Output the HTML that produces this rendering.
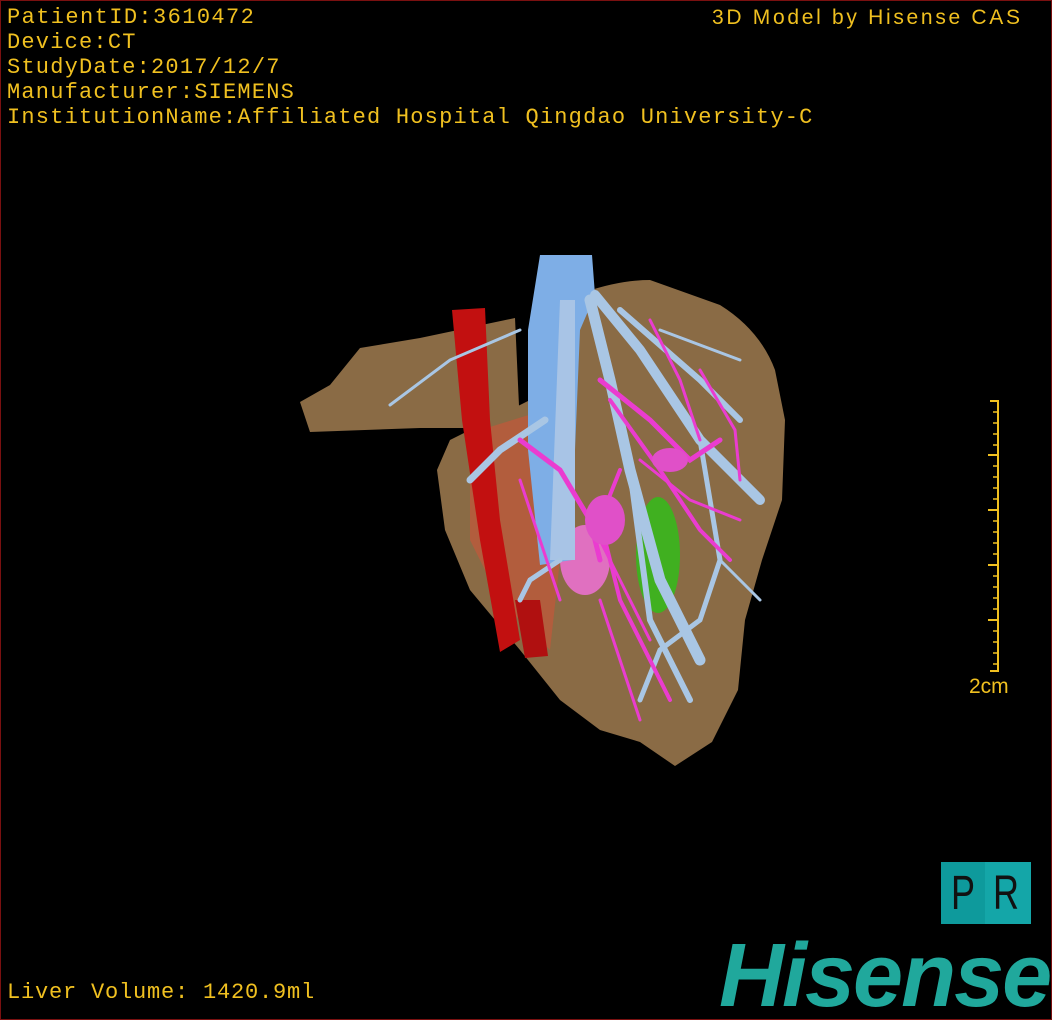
<!DOCTYPE html>
<html><head><meta charset="utf-8"><style>
html,body{margin:0;padding:0;background:#000;}
#w{position:relative;width:1052px;height:1020px;background:#000;box-sizing:border-box;border:1px solid #7a1010;overflow:hidden;font-family:"Liberation Mono",monospace;}
.t{position:absolute;color:#f0c020;font-size:22px;line-height:25px;white-space:pre;letter-spacing:1.2px;}
</style></head><body><div id="w">
<div class="t" style="left:6px;top:4px;letter-spacing:1.4px">PatientID:3610472</div>
<div class="t" style="left:6px;top:29px">Device:CT
StudyDate:2017/12/7
Manufacturer:SIEMENS
InstitutionName:Affiliated Hospital Qingdao University-C</div>
<div class="t" style="left:711px;top:4px;font-family:'Liberation Sans',sans-serif;font-size:21px;letter-spacing:2.7px">3D Model by Hisense CAS</div>
<div class="t" style="left:6px;top:979px;font-size:22px;letter-spacing:0.8px">Liver Volume: 1420.9ml</div>
<div class="t" style="left:968px;top:673px;font-family:'Liberation Sans',sans-serif;font-size:21px;letter-spacing:0">2cm</div>
<svg width="1052" height="1020" style="position:absolute;left:-1px;top:-1px">
<g stroke="#f0c020" stroke-width="2">
<line x1="998" y1="400" x2="998" y2="672"/>
<line x1="990" y1="401" x2="998" y2="401"/>
<line x1="990" y1="671" x2="998" y2="671"/>
<line x1="988" y1="455" x2="998" y2="455"/>
<line x1="988" y1="510" x2="998" y2="510"/>
<line x1="988" y1="565" x2="998" y2="565"/>
<line x1="988" y1="620" x2="998" y2="620"/>
<g stroke-width="1.5">
<line x1="993" y1="412" x2="998" y2="412"/><line x1="993" y1="423" x2="998" y2="423"/><line x1="993" y1="434" x2="998" y2="434"/><line x1="993" y1="445" x2="998" y2="445"/>
<line x1="993" y1="466" x2="998" y2="466"/><line x1="993" y1="477" x2="998" y2="477"/><line x1="993" y1="488" x2="998" y2="488"/><line x1="993" y1="499" x2="998" y2="499"/>
<line x1="993" y1="521" x2="998" y2="521"/><line x1="993" y1="532" x2="998" y2="532"/><line x1="993" y1="543" x2="998" y2="543"/><line x1="993" y1="554" x2="998" y2="554"/>
<line x1="993" y1="576" x2="998" y2="576"/><line x1="993" y1="587" x2="998" y2="587"/><line x1="993" y1="598" x2="998" y2="598"/><line x1="993" y1="609" x2="998" y2="609"/>
<line x1="993" y1="631" x2="998" y2="631"/><line x1="993" y1="642" x2="998" y2="642"/><line x1="993" y1="653" x2="998" y2="653"/><line x1="993" y1="664" x2="998" y2="664"/>
</g></g>
<path d="M300,402 L330,385 L360,348 L420,338 L515,318 L520,428 L420,428 L310,432 Z" fill="#8a6b45"/>
<path d="M585,292 Q620,280 650,280 L720,305 Q760,330 775,370 L785,420 L782,500 L762,560 L745,620 L738,690 L712,742 L675,766 L640,742 L600,730 L560,700 L520,650 L470,590 L445,530 L437,470 L450,440 L480,425 L530,400 Z" fill="#8a6b45"/>
<path d="M480,430 L545,410 L560,560 L550,650 L500,600 L470,540 L470,460 Z" fill="#b85b3c" opacity="0.85"/>
<path d="M452,310 L485,308 L490,420 L500,520 L520,640 L500,652 L480,540 L462,420 Z" fill="#c21010"/>
<path d="M515,600 L540,600 L548,656 L525,658 Z" fill="#b01010"/>
<ellipse cx="658" cy="555" rx="22" ry="58" fill="#40b020"/>
<ellipse cx="585" cy="560" rx="25" ry="35" fill="#e070c0"/>
<path d="M540,255 L592,255 L595,295 L580,330 L575,450 L572,560 L540,565 L528,450 L528,330 Z" fill="#7eaee6"/>
<path d="M560,300 L575,300 L575,560 L550,560 Z" fill="#a8c4e6"/>
<g stroke="#a9c6e4" fill="none" stroke-linecap="round">
<path d="M595,295 L640,350 L700,440 L760,500" stroke-width="10"/>
<path d="M590,300 L610,380 L630,470 L660,580 L700,660" stroke-width="11"/>
<path d="M630,470 L650,620 L690,700" stroke-width="6"/>
<path d="M620,310 L700,380 L740,420" stroke-width="6"/>
<path d="M700,440 L720,560 L700,620 L660,650 L640,700" stroke-width="5"/>
<path d="M545,420 L500,450 L470,480" stroke-width="7"/>
<path d="M520,330 L450,360 L390,405" stroke-width="3"/>
<path d="M560,560 L530,580 L520,600" stroke-width="5"/>
<path d="M660,330 L740,360" stroke-width="3"/>
<path d="M720,560 L760,600" stroke-width="3"/>
</g>
<g stroke="#ea3cd0" fill="none" stroke-linecap="round">
<path d="M520,440 L560,470 L590,520 L600,560" stroke-width="5"/>
<path d="M600,380 L650,420 L690,460 L720,440" stroke-width="5"/>
<path d="M610,400 L660,470 L700,530 L730,560" stroke-width="4"/>
<path d="M620,470 L600,520 L620,600 L650,660 L670,700" stroke-width="4"/>
<path d="M640,460 L690,500 L740,520" stroke-width="3"/>
<path d="M700,370 L735,430 L740,480" stroke-width="3"/>
<path d="M650,320 L680,380 L700,440" stroke-width="3"/>
<path d="M520,480 L540,540 L560,600" stroke-width="3"/>
<path d="M600,600 L620,660 L640,720" stroke-width="3"/>
<path d="M590,520 L620,580 L650,640" stroke-width="3"/>
</g>
<ellipse cx="605" cy="520" rx="20" ry="25" fill="#e050c8"/>
<ellipse cx="670" cy="460" rx="18" ry="12" fill="#e050c8"/>
</svg>
<div style="position:absolute;left:940px;top:861px;width:90px;height:62px;background:#0e9a9c"><div style="position:absolute;left:44px;top:0;width:46px;height:62px;background:#14a6a8"></div>
<span style="position:absolute;left:10px;top:4px;font-family:'Liberation Sans',sans-serif;font-size:48px;color:#111;transform:scaleX(0.75);transform-origin:left">P</span>
<span style="position:absolute;left:52px;top:4px;font-family:'Liberation Sans',sans-serif;font-size:48px;color:#111;transform:scaleX(0.75);transform-origin:left">R</span></div>
<div style="position:absolute;left:718px;top:930px;font-family:'Liberation Sans',sans-serif;font-weight:bold;font-style:italic;font-size:90px;line-height:90px;color:#20a89c;letter-spacing:-2px">Hisense</div>
</div></body></html>
